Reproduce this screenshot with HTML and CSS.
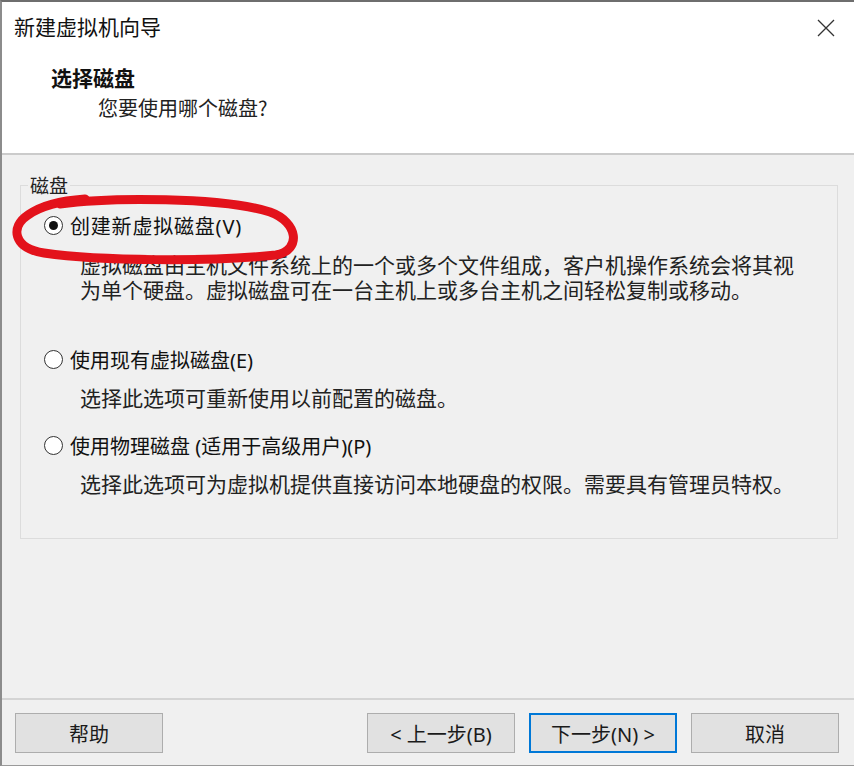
FILE: index.html
```html
<!DOCTYPE html>
<html lang="zh-CN">
<head>
<meta charset="utf-8">
<title>新建虚拟机向导</title>
<link rel="stylesheet" href="styles.css">
</head>
<body>
<div class="page">
  <div class="window">
    <div class="titlebar">
      <span class="title">新建虚拟机向导</span>
      <svg class="close" width="18" height="18" viewBox="0 0 18 18"><path d="M1 1 L17 17 M17 1 L1 17" stroke="#333" stroke-width="1.3" fill="none"/></svg>
    </div>
    <div class="header">
      <div class="h-title">选择磁盘</div>
      <div class="h-sub">您要使用哪个磁盘?</div>
    </div>
    <div class="sep"></div>
    <div class="body">
      <fieldset class="group">
        <legend>磁盘</legend>
        <div class="option opt1">
          <div class="row"><span class="radio checked"></span><span class="label">创建新虚拟磁盘(V)</span></div>
          <div class="desc">虚拟磁盘由主机文件系统上的一个或多个文件组成，客户机操作系统会将其视<br>为单个硬盘。虚拟磁盘可在一台主机上或多台主机之间轻松复制或移动。</div>
        </div>
        <div class="option opt2">
          <div class="row"><span class="radio"></span><span class="label">使用现有虚拟磁盘(E)</span></div>
          <div class="desc">选择此选项可重新使用以前配置的磁盘。</div>
        </div>
        <div class="option opt3">
          <div class="row"><span class="radio"></span><span class="label">使用物理磁盘 (适用于高级用户)(P)</span></div>
          <div class="desc">选择此选项可为虚拟机提供直接访问本地硬盘的权限。需要具有管理员特权。</div>
        </div>
      </fieldset>
    </div>
    <div class="footer">
      <button class="btn">帮助</button>
      <div class="spacer"></div>
      <button class="btn">&lt; 上一步(B)</button>
      <button class="btn default">下一步(N) &gt;</button>
      <button class="btn">取消</button>
    </div>
  </div>
  <svg class="annot" width="854" height="766" viewBox="0 0 854 766">
    <path d="M 60 204 C 110 197, 222 197, 270 212 C 298 222, 302 250, 276 255 C 210 262, 100 261, 44 253 C 13 248, 10 227, 28 215 C 42 205, 60 201, 85 199" fill="none" stroke="#e3121b" stroke-width="9" stroke-linecap="round" stroke-linejoin="round"/>
  </svg>
</div>
</body>
</html>
```
FILE: styles.css
```css
* { box-sizing: border-box; }
html, body { margin: 0; padding: 0; }
body {
  font-family: "Noto Sans", "Noto Sans CJK SC", sans-serif;
  color: #111;
  background: #f0f0f0;
}
.page {
  position: relative;
  width: 854px;
  height: 766px;
  overflow: hidden;
}
.window {
  width: 854px;
  height: 766px;
  border-top: 2px solid #6e6e6e;
  border-left: 2px solid #8c8c8c;
  border-bottom: 1px solid #9a9a9a;
  display: flex;
  flex-direction: column;
  background: #f0f0f0;
}
.titlebar {
  height: 53px;
  background: #fff;
  display: flex;
  align-items: center;
  padding-left: 12px;
  padding-right: 19px;
  padding-bottom: 6px;
}
.title {
  font-size: 21px;
  flex: 1;
  font-family: "Noto Sans CJK SC", sans-serif;
  color: #111;
}
.close { display: block; margin-top: 4px; }
.header {
  height: 98px;
  background: #fff;
  padding-left: 49px;
  padding-top: 7px;
}
.h-title {
  font-size: 21px;
  font-weight: bold;
  line-height: 30px;
  font-family: "Noto Sans CJK SC", sans-serif;
}
.h-sub {
  font-size: 20px;
  line-height: 32px;
  padding-left: 47px;
  font-family: "Noto Sans CJK SC", sans-serif;
  color: #222;
}
.sep {
  height: 2px;
  background: #cbcbcb;
}
.body {
  flex: 1;
  padding: 18px 16px 0 18px;
}
.group {
  margin: 0;
  padding: 0 0 42px 7px;
  border: 1px solid #dcdcdc;
  height: 366px;
}
.group legend {
  font-size: 19px;
  line-height: 24px;
  padding: 0 2px;
  font-family: "Noto Sans CJK SC", sans-serif;
  color: #222;
}
.row {
  display: flex;
  align-items: center;
  height: 30px;
}
.radio {
  width: 19px;
  height: 19px;
  border: 1.5px solid #333;
  border-radius: 50%;
  background: #fff;
  margin-left: 16px;
  margin-right: 7px;
  display: flex;
  align-items: center;
  justify-content: center;
  flex: none;
}
.radio.checked::after {
  content: "";
  width: 9px;
  height: 9px;
  border-radius: 50%;
  background: #111;
}
.label {
  font-size: 20px;
  color: #111;
}
.opt1 .label { letter-spacing: 0.8px; }
.desc {
  font-size: 21px;
  line-height: 25px;
  padding-left: 52px;
  color: #222;
  font-family: "Noto Sans CJK SC", sans-serif;
}
.opt1 { margin-top: 13px; }
.opt1 .desc { margin-top: 12px; }
.opt2 { margin-top: 42px; }
.opt2 .desc { margin-top: 11px; }
.opt3 { margin-top: 20px; }
.opt3 .desc { margin-top: 11px; }
.footer {
  height: 67px;
  border-top: 2px solid #d4d4d4;
  display: flex;
  align-items: flex-start;
  padding: 13px 15px 0 13px;
  gap: 14px;
}
.spacer { flex: 1; }
.btn {
  width: 148px;
  height: 40px;
  background: #e1e1e1;
  border: 1px solid #adadad;
  font-family: "Noto Sans", "Noto Sans CJK SC", sans-serif;
  font-size: 20px;
  color: #1a1a1a;
  padding: 0;
  margin: 0;
}
.btn.default {
  border: 2px solid #0078d7;
}
.annot {
  position: absolute;
  left: 0;
  top: 0;
  pointer-events: none;
}
```
